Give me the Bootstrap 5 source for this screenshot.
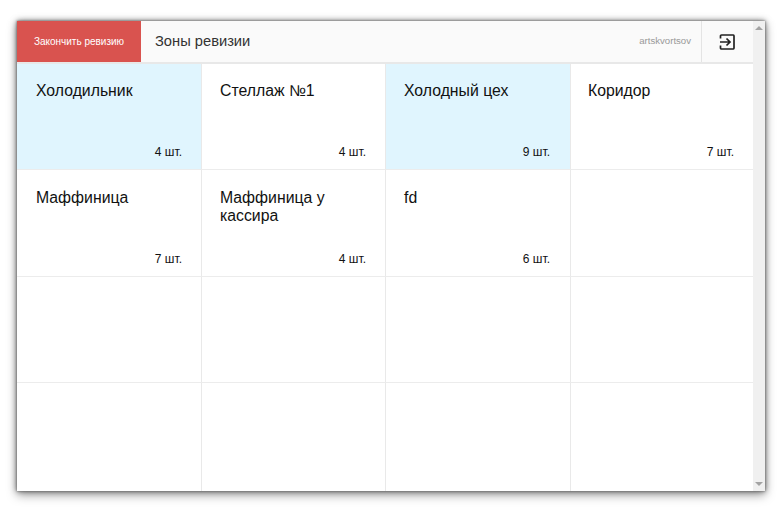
<!DOCTYPE html>
<html lang="en">
<head>
  <meta charset="UTF-8">
  <title>Зоны ревизии</title>
  <link href="https://cdn.jsdelivr.net/npm/bootstrap@5.3.0/dist/css/bootstrap.min.css" rel="stylesheet">
  <style>
    html, body { height: 100%; overflow: hidden; background: #fff; }
    body { padding: 21px 15px 22px 17px; font-family: "Liberation Sans", Arial, sans-serif; color: #111; }
    .app-window {
      height: 470px;
      background: #fff;
      box-shadow: 0 0 2px #666, 0 0 6px rgba(0,0,0,.55), 0 4px 10px rgba(0,0,0,.35);
    }
    .app-main { width: 736px; }
    .top-bar { height: 43px; background: #fafafa; border-bottom: 2px solid #e8e8e8; }
    .finish-btn {
      width: 124px; height: 41px; padding: 0;
      background: #d9534f; border: 0; border-radius: 0;
      color: #fff; font-size: 10px;
    }
    .finish-btn:hover { background: #d9534f; color: #fff; }
    .zone-title { font-size: 14.7px; color: #333; padding-left: 14px; }
    .user-name { font-size: 9.6px; color: #999; padding-right: 10px; }
    .logout-btn {
      width: 52px; height: 41px; padding-right: 2px;
      border-left: 1px solid #e4e4e4;
    }
    .zones-grid {
      display: grid;
      grid-template-columns: 185px 184px 185px 182px;
      grid-template-rows: 106px 107px 106px 108px;
    }
    .zone-cell {
      padding: 18px 19px 10px 18px;
      border-right: 1px solid #e9e9e9;
      border-bottom: 1px solid #ececec;
      font-size: 15.8px;
      line-height: 18px;
    }
    .zone-cell:nth-child(n+5) { padding-top: 19px; }
    .zone-cell:nth-child(4n+1) { padding-left: 19px; }
    .zone-cell:nth-child(4n+3) { padding-right: 20px; }
    .zone-cell:nth-child(4n) { padding-left: 17px; border-right: 0; }
    .zone-cell:nth-last-child(-n+4) { border-bottom: 0; }
    .zone-active { background: #e0f5fe; }
    .zone-count { font-size: 12px; line-height: 14px; }
    .scroll-track { width: 12px; background: #f0f0f0; }
    .arrow-up, .arrow-down { width: 0; height: 0; border-left: 4px solid transparent; border-right: 4px solid transparent; }
    .arrow-up { border-bottom: 4px solid #a3a3a3; margin-top: 5px; }
    .arrow-down { border-top: 4px solid #a3a3a3; margin-bottom: 5px; }
  </style>
</head>
<body>
  <div class="app-window d-flex">
    <div class="app-main">
      <div class="top-bar d-flex align-items-start">
        <button type="button" class="btn finish-btn">Закончить ревизию</button>
        <div class="zone-title flex-grow-1 align-self-stretch d-flex align-items-center">Зоны ревизии</div>
        <div class="user-name align-self-stretch d-flex align-items-center">artskvortsov</div>
        <div class="logout-btn d-flex align-items-center justify-content-center">
          <svg width="16" height="16" viewBox="0 0 16 16" fill="none" stroke="#222" stroke-width="1.7">
            <path d="M1.500 4.500V2a1 1 0 0 1 1-1h11.700a1 1 0 0 1 .8 1v12a1 1 0 0 1-.8 1H2.500a1 1 0 0 1-1-1v-2.500"/>
            <path d="M1 8h10M7.500 4.500 11 8l-3.500 3.500"/>
          </svg>
        </div>
      </div>
      <div class="zones-grid">
        <div class="zone-cell zone-active d-flex flex-column justify-content-between"><div>Холодильник</div><div class="zone-count text-end">4 шт.</div></div>
        <div class="zone-cell d-flex flex-column justify-content-between"><div>Стеллаж №1</div><div class="zone-count text-end">4 шт.</div></div>
        <div class="zone-cell zone-active d-flex flex-column justify-content-between"><div>Холодный цех</div><div class="zone-count text-end">9 шт.</div></div>
        <div class="zone-cell d-flex flex-column justify-content-between"><div>Коридор</div><div class="zone-count text-end">7 шт.</div></div>
        <div class="zone-cell d-flex flex-column justify-content-between"><div>Маффиница</div><div class="zone-count text-end">7 шт.</div></div>
        <div class="zone-cell d-flex flex-column justify-content-between"><div>Маффиница у кассира</div><div class="zone-count text-end">4 шт.</div></div>
        <div class="zone-cell d-flex flex-column justify-content-between"><div>fd</div><div class="zone-count text-end">6 шт.</div></div>
        <div class="zone-cell"></div>
        <div class="zone-cell"></div><div class="zone-cell"></div><div class="zone-cell"></div><div class="zone-cell"></div>
        <div class="zone-cell"></div><div class="zone-cell"></div><div class="zone-cell"></div><div class="zone-cell"></div>
      </div>
    </div>
    <div class="scroll-track d-flex flex-column justify-content-between align-items-center">
      <div class="arrow-up"></div>
      <div class="arrow-down"></div>
    </div>
  </div>
  <script src="https://cdn.jsdelivr.net/npm/bootstrap@5.3.0/dist/js/bootstrap.bundle.min.js"></script>
</body>
</html>
